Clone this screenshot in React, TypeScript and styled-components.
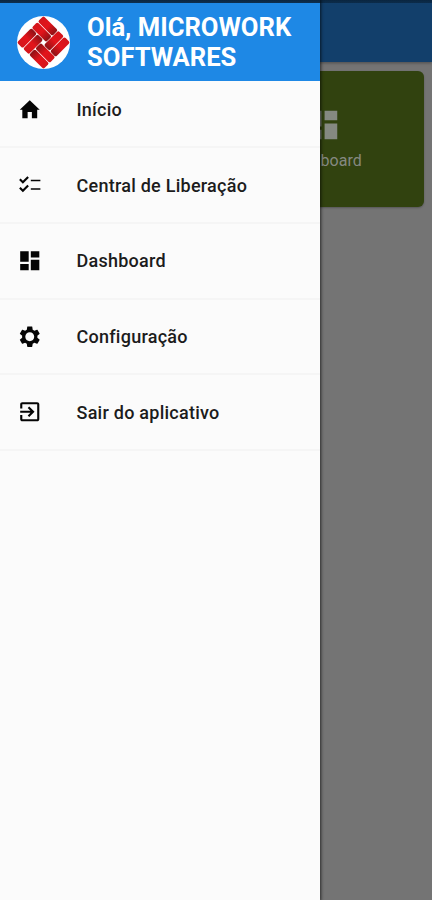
import React from "react";
import styled, { createGlobalStyle } from "styled-components";

const GlobalStyle = createGlobalStyle`
  * { box-sizing: border-box; }
  body { margin: 0; font-family: Roboto, sans-serif; background: #747474; }
`;

const Screen = styled.div`
  position: relative;
  width: 432px;
  height: 900px;
  overflow: hidden;
  background: #747474;
`;

const StatusStrip = styled.div`
  height: 3px;
  background: linear-gradient(#0b2640, #0d2f50);
`;

const AppBar = styled.div`
  height: 59px;
  background: #123f6b;
  box-shadow: 0 1px 3px rgba(0, 0, 0, 0.35);
`;

const CardGrid = styled.main`
  display: flex;
  justify-content: flex-end;
  padding: 8.5px 8px;
`;

const Card = styled.div`
  width: 202px;
  height: 136px;
  border-radius: 6px;
  background: #31420f;
  color: #858981;
  display: flex;
  flex-direction: column;
  align-items: center;
  padding-top: 35px;
  font-size: 16px;
  line-height: 20px;
  box-shadow: 0 1px 2px rgba(0, 0, 0, 0.25);
`;

const CardLabel = styled.span`
  margin-top: 7px;
`;

const Drawer = styled.aside`
  position: absolute;
  inset: 0 auto 0 0;
  width: 320px;
  display: flex;
  flex-direction: column;
  background: #fbfbfb;
  box-shadow: 0 0 3px 1px rgba(0, 0, 0, 0.65);
`;

const DrawerHeader = styled.header`
  height: 78px;
  display: flex;
  align-items: center;
  padding-left: 16px;
  gap: 16px;
  background: #1e88e5;
`;

const Greeting = styled.h1`
  margin: -1px 0 0;
  width: 225px;
  font-size: 25.6px;
  line-height: 30px;
  font-weight: 700;
  color: #fff;
`;

const Menu = styled.nav`
  display: flex;
  flex-direction: column;
  margin-top: -8.4px;
`;

const MenuItem = styled.a`
  height: 75.7px;
  display: flex;
  align-items: center;
  gap: 34px;
  padding-left: 17px;
  border-bottom: 2px solid #f5f5f5;
  font-size: 18px;
  font-weight: 500;
  letter-spacing: 0.25px;
  color: #1c1c1c;

  svg {
    color: #050505;
  }
`;

const Icon = ({ d, size = 25.5 }: { d: string; size?: number }) => (
  <svg width={size} height={size} viewBox="0 0 24 24" fill="currentColor" aria-hidden="true">
    <path d={d} />
  </svg>
);

const DASHBOARD = "M3 13h8V3H3v10zm0 8h8v-6H3v6zm10 0h8V11h-8v10zm0-18v6h8V3h-8z";

const items = [
  { label: "Início", d: "M10 20v-6h4v6h5v-8h2.4L12 3 2.6 12H5v8z" },
  {
    label: "Central de Liberação",
    d: "M22 7.2h-9v1.6h9V7.2zm0 8h-9v1.6h9v-1.6zM5.54 11L2 7.46l1.41-1.41 2.12 2.12 4.24-4.24 1.41 1.41L5.54 11zm0 8L2 15.46l1.41-1.41 2.12 2.12 4.24-4.24 1.41 1.41L5.54 19z",
  },
  { label: "Dashboard", d: DASHBOARD },
  {
    label: "Configuração",
    d: "M19.14 12.94c.04-.3.06-.61.06-.94 0-.32-.02-.64-.07-.94l2.03-1.58c.18-.14.23-.41.12-.61l-1.92-3.32c-.12-.22-.37-.29-.59-.22l-2.39.96c-.5-.38-1.03-.7-1.62-.94l-.36-2.54c-.04-.24-.24-.41-.48-.41h-3.84c-.24 0-.43.17-.47.41l-.36 2.54c-.59.24-1.13.57-1.62.94l-2.39-.96c-.22-.08-.47 0-.59.22L2.74 8.87c-.12.21-.08.47.12.61l2.03 1.58c-.05.3-.09.63-.09.94s.02.64.07.94l-2.03 1.58c-.18.14-.23.41-.12.61l1.92 3.32c.12.22.37.29.59.22l2.39-.96c.5.38 1.03.7 1.62.94l.36 2.54c.05.24.24.41.48.41h3.84c.24 0 .44-.17.47-.41l.36-2.54c.59-.24 1.13-.56 1.62-.94l2.39.96c.22.08.47 0 .59-.22l1.92-3.32c.12-.22.07-.47-.12-.61l-2.01-1.58zM12 16.2c-2.32 0-4.2-1.88-4.2-4.2s1.88-4.2 4.2-4.2 4.2 1.88 4.2 4.2-1.88 4.2-4.2 4.2z",
  },
  {
    label: "Sair do aplicativo",
    d: "M10.09 15.59L11.5 17l5-5-5-5-1.41 1.41L12.67 11H3v2h9.67l-2.58 2.59zM19 3H5c-1.11 0-2 .9-2 2v4h2V5h14v14H5v-4H3v4c0 1.1.89 2 2 2h14c1.1 0 2-.9 2-2V5c0-1.1-.9-2-2-2z",
  },
];

const Logo = () => (
  <svg width="55" height="55" viewBox="-27.5 -27.5 55 55" aria-hidden="true">
    <defs>
      <linearGradient id="bar" x1="0" y1="0" x2="1" y2="0">
        <stop offset="0" stopColor="#d4151b" />
        <stop offset="0.5" stopColor="#e3141b" />
        <stop offset="1" stopColor="#8c1216" />
      </linearGradient>
    </defs>
    <circle r="26.5" fill="#fff" />
    {[0, 90, 180, 270].map((angle) => (
      <g key={angle} transform={`rotate(${angle + 45})`} fill="url(#bar)">
        <rect x="-18.8" y="-18.8" width="20.4" height="8" rx="1.8" />
        <rect x="-18.8" y="-10.1" width="20.4" height="8" rx="1.8" />
      </g>
    ))}
  </svg>
);

export default function App() {
  return (
    <Screen>
      <GlobalStyle />
      <StatusStrip />
      <AppBar />
      <CardGrid>
        <Card>
          <Icon d={DASHBOARD} size={38} />
          <CardLabel>Dashboard</CardLabel>
        </Card>
      </CardGrid>
      <Drawer>
        <StatusStrip />
        <DrawerHeader>
          <Logo />
          <Greeting>Olá, MICROWORK SOFTWARES</Greeting>
        </DrawerHeader>
        <Menu>
          {items.map((item) => (
            <MenuItem key={item.label}>
              <Icon d={item.d} />
              {item.label}
            </MenuItem>
          ))}
        </Menu>
      </Drawer>
    </Screen>
  );
}
